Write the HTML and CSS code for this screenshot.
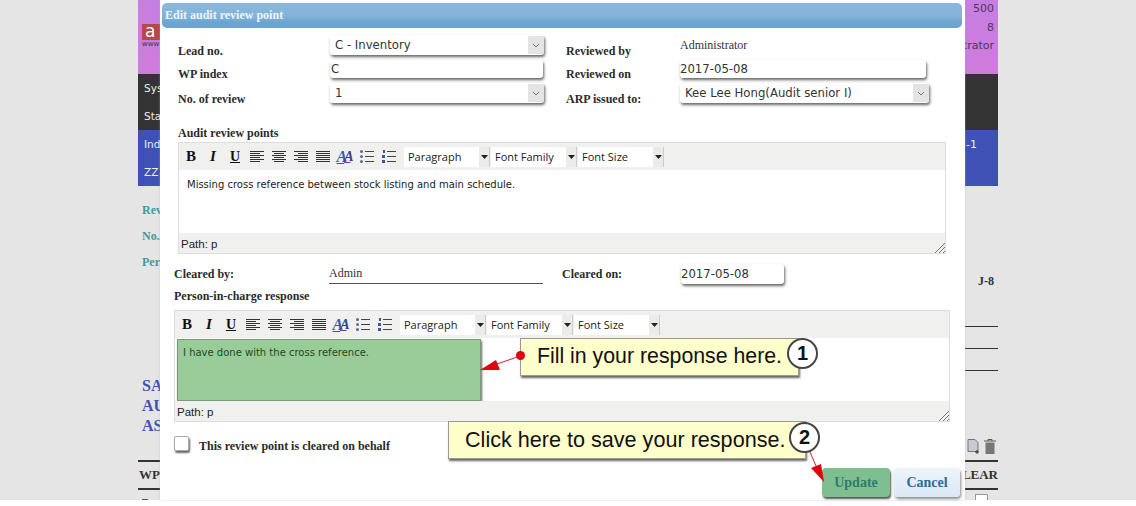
FILE: index.html
```html
<!DOCTYPE html>
<html lang="en">
<head>
  <meta charset="UTF-8" />
  <title>Edit audit review point</title>
  <link rel="stylesheet" href="styles.css">
</head>
<body>
  <svg class="defs" width="0" height="0">
    <symbol id="i-left" viewBox="0 0 14 11"><path d="M0 .5h14M0 2.5h10M0 4.5h14M0 6.5h10M0 8.5h14M0 10.5h10" stroke="#333" fill="none"/></symbol>
    <symbol id="i-center" viewBox="0 0 14 11"><path d="M0 .5h14M2 2.5h10M0 4.5h14M2 6.5h10M0 8.5h14M2 10.5h10" stroke="#333" fill="none"/></symbol>
    <symbol id="i-right" viewBox="0 0 14 11"><path d="M0 .5h14M4 2.5h10M0 4.5h14M4 6.5h10M0 8.5h14M4 10.5h10" stroke="#333" fill="none"/></symbol>
    <symbol id="i-full" viewBox="0 0 14 11"><path d="M0 .5h14M0 2.5h14M0 4.5h14M0 6.5h14M0 8.5h14M0 10.5h14" stroke="#333" fill="none"/></symbol>
    <symbol id="i-bullet" viewBox="0 0 14 13"><path d="M5 1.500h9M5 6.500h9M5 11.500h9" stroke="#444" fill="none"/><circle cx="1.500" cy="1.500" r="1.500" fill="#5a6a90"/><circle cx="1.500" cy="6.500" r="1.500" fill="#5a6a90"/><circle cx="1.500" cy="11.500" r="1.500" fill="#5a6a90"/></symbol>
    <symbol id="i-number" viewBox="0 0 14 13"><path d="M5 1.500h9M5 6.500h9M5 11.500h9" stroke="#444" fill="none"/><path d="M1 0h2v3H1zM0 5h3v3H0zM0 10h3v3H0z" fill="#3a55a0"/></symbol>
    <symbol id="i-caret" viewBox="0 0 7 4"><path d="M0 0h7L3.500 4z" fill="#222"/></symbol>
    <symbol id="i-grip" viewBox="0 0 10 10"><path d="M0 10L10 0M4 10l6-6M8 10l2-2" stroke="#777" fill="none"/></symbol>
    <symbol id="i-chevron" viewBox="0 0 8 5"><path d="M1 1l3 3 3-3" stroke="#777" fill="none"/></symbol>
  </svg>

  <div class="page">
    <div class="app">
      <header class="app-header">
        <div class="logo">
          <div class="logo-mark">a</div>
          <div class="logo-sub">www</div>
        </div>
        <div class="app-info">
          <div>500</div>
          <div>8</div>
          <div>trator</div>
        </div>
      </header>
      <div class="band band-dark">
        <div class="band-row"><span>Sys</span></div>
        <div class="band-row"><span>Sta</span></div>
      </div>
      <div class="band band-blue">
        <div class="band-row"><span>Ind</span><span class="band-end">-1</span></div>
        <div class="band-row"><span>ZZ</span></div>
      </div>
      <section class="summary">
        <div class="summary-left">
          <div class="meta-line">Rev</div>
          <div class="meta-line">No.</div>
          <div class="meta-line">Per</div>
          <div class="title-lines">
            <div>SA</div>
            <div>AU</div>
            <div>AS</div>
          </div>
        </div>
        <div class="summary-right">
          <div class="ref">J-8</div>
          <div class="rule"></div>
          <div class="rule"></div>
          <div class="rule"></div>
          <div class="tools">
            <svg width="13" height="15" viewBox="0 0 13 15"><path d="M1 .5h7l3 3v9H1z" fill="#c9c9d2" stroke="#777"/><path d="M10 11v4M8 13h4" stroke="#333"/></svg>
            <svg width="12" height="15" viewBox="0 0 12 15"><path d="M0 2h12M4 2V.5h4V2" stroke="#555" fill="none"/><path d="M1.500 3.500h9V15h-9z" fill="#777"/></svg>
          </div>
        </div>
      </section>
      <div class="table-head"><span>WP</span><span>LEAR</span></div>
      <div class="table-row"><span class="table-stub"></span><span class="table-check"></span></div>
    </div>
  </div>

  <div class="modal">
    <div class="modal-title">Edit audit review point</div>
    <div class="form-grid">
      <label class="lbl lbl-low">Lead no.</label>
      <div class="select"><span>C - Inventory</span><i class="select-btn"><svg width="8" height="5"><use href="#i-chevron"/></svg></i></div>
      <label class="lbl lbl-low">Reviewed by</label>
      <div class="plain-value">Administrator</div>

      <label class="lbl lbl-low">WP index</label>
      <input class="field field-tight" type="text" value="C">
      <label class="lbl lbl-low">Reviewed on</label>
      <input class="field field-date" type="text" value="2017-05-08">

      <label class="lbl lbl-low">No. of review</label>
      <div class="select"><span>1</span><i class="select-btn"><svg width="8" height="5"><use href="#i-chevron"/></svg></i></div>
      <label class="lbl lbl-low">ARP issued to:</label>
      <div class="select select-wide"><span>Kee Lee Hong(Audit senior I)</span><i class="select-btn"><svg width="8" height="5"><use href="#i-chevron"/></svg></i></div>
    </div>

    <div class="section-label section-audit">Audit review points</div>
    <div class="editor editor-audit">
      <div class="toolbar">
        <span class="tb tb-b">B</span>
        <span class="tb tb-i">I</span>
        <span class="tb tb-u">U</span>
        <span class="tb"><svg width="14" height="11"><use href="#i-left"/></svg></span>
        <span class="tb"><svg width="14" height="11"><use href="#i-center"/></svg></span>
        <span class="tb"><svg width="14" height="11"><use href="#i-right"/></svg></span>
        <span class="tb"><svg width="14" height="11"><use href="#i-full"/></svg></span>
        <span class="tb tb-a">A<b>A</b></span>
        <span class="tb"><svg width="14" height="13"><use href="#i-bullet"/></svg></span>
        <span class="tb"><svg width="14" height="13"><use href="#i-number"/></svg></span>
        <span class="tb-select">Paragraph</span><span class="tb-arrow"><svg width="7" height="4"><use href="#i-caret"/></svg></span>
        <span class="tb-select">Font Family</span><span class="tb-arrow"><svg width="7" height="4"><use href="#i-caret"/></svg></span>
        <span class="tb-select">Font Size</span><span class="tb-arrow"><svg width="7" height="4"><use href="#i-caret"/></svg></span>
      </div>
      <div class="editor-body"><p class="editor-text">Missing cross reference between stock listing and main schedule.</p></div>
      <div class="statusbar"><span>Path: p</span><svg width="10" height="10"><use href="#i-grip"/></svg></div>
    </div>

    <div class="cleared-row">
      <label class="lbl">Cleared by:</label>
      <div class="underlined">Admin</div>
      <label class="lbl">Cleared on:</label>
      <input class="field field-cleared" type="text" value="2017-05-08">
    </div>

    <div class="section-label section-response">Person-in-charge response</div>
    <div class="editor editor-response">
      <div class="toolbar">
        <span class="tb tb-b">B</span>
        <span class="tb tb-i">I</span>
        <span class="tb tb-u">U</span>
        <span class="tb"><svg width="14" height="11"><use href="#i-left"/></svg></span>
        <span class="tb"><svg width="14" height="11"><use href="#i-center"/></svg></span>
        <span class="tb"><svg width="14" height="11"><use href="#i-right"/></svg></span>
        <span class="tb"><svg width="14" height="11"><use href="#i-full"/></svg></span>
        <span class="tb tb-a">A<b>A</b></span>
        <span class="tb"><svg width="14" height="13"><use href="#i-bullet"/></svg></span>
        <span class="tb"><svg width="14" height="13"><use href="#i-number"/></svg></span>
        <span class="tb-select">Paragraph</span><span class="tb-arrow"><svg width="7" height="4"><use href="#i-caret"/></svg></span>
        <span class="tb-select">Font Family</span><span class="tb-arrow"><svg width="7" height="4"><use href="#i-caret"/></svg></span>
        <span class="tb-select">Font Size</span><span class="tb-arrow"><svg width="7" height="4"><use href="#i-caret"/></svg></span>
      </div>
      <div class="editor-body"><div class="highlight">I have done with the cross reference.</div></div>
      <div class="statusbar"><span>Path: p</span><svg width="10" height="10"><use href="#i-grip"/></svg></div>
    </div>

    <div class="behalf-row">
      <span class="checkbox"></span>
      <label class="lbl">This review point is cleared on behalf</label>
    </div>

    <div class="actions">
      <button class="btn btn-update">Update</button>
      <button class="btn btn-cancel">Cancel</button>
    </div>
  </div>

  <div class="callout callout-one">Fill in your response here.<span class="callout-num">1</span></div>
  <div class="callout callout-two">Click here to save your response.<span class="callout-num">2</span></div>

  <!-- annotation arrows sit over the callouts -->
  <svg class="arrows" width="1136" height="506" viewBox="0 0 1136 506">
    <path d="M520 356L497 364" stroke="#e8182c" stroke-width="1"/>
    <circle cx="520.500" cy="355.500" r="4.500" fill="#e00012"/>
    <path d="M480 370L496 360L500 370z" fill="#e00012"/>
    <path d="M810 452L816 466" stroke="#e8182c" stroke-width="1"/>
    <path d="M824 482L811 468L821 464z" fill="#e00012"/>
  </svg>
</body>
</html>
```

FILE: styles.css
```css
* {
  box-sizing: border-box;
  margin: 0;
  padding: 0;
}

body {
  background: #fff;
  height: 506px;
  overflow: hidden;
  position: relative;
  font-family: 'Liberation Serif', serif;
}

.defs {
  position: absolute;
}

/* page behind the dialog */
.page {
  background: #e5e5e5;
  height: 500px;
  overflow: hidden;
  display: flex;
  justify-content: center;
}

.app {
  width: 860px;
  display: flex;
  flex-direction: column;
}

.app-header {
  height: 74px;
  flex: none;
  background: linear-gradient(#c67ee2, #cf7bdc);
  display: flex;
  justify-content: space-between;
  padding: 0 4px;
  color: #4a3a55;
  font-family: 'DejaVu Sans', sans-serif;
  font-size: 11px;
}

.logo {
  margin-top: 24px;
  width: 30px;
}

.logo-mark {
  background: #b6474d;
  color: #fff;
  height: 16px;
  line-height: 14px;
  font-size: 17px;
  padding-left: 3px;
}

.logo-sub {
  font-size: 7px;
  line-height: 8px;
  color: #333;
}

.app-info {
  text-align: right;
  line-height: 18.500px;
}

.band {
  flex: none;
  font-family: 'DejaVu Sans', sans-serif;
  font-size: 10.500px;
  color: #eee;
  padding: 0 0 0 6px;
}

.band-dark {
  background: #333;
}

.band-blue {
  background: #3f51b5;
}

.band-row {
  height: 28px;
  display: flex;
  justify-content: space-between;
  align-items: center;
}

.band-end {
  width: 32px;
  font-size: 11px;
}

.summary {
  height: 274px;
  flex: none;
  display: flex;
  justify-content: space-between;
}

.summary-left {
  padding: 16px 0 0 4px;
}

.meta-line {
  height: 16px;
  margin-bottom: 10px;
  font-size: 12px;
  font-weight: bold;
  line-height: 16px;
  color: #3f9a9a;
}

.title-lines {
  margin-top: 106px;
  font-size: 16px;
  font-weight: bold;
  line-height: 20px;
  color: #3f51b5;
}

.summary-right {
  width: 33px;
  padding-top: 88px;
}

.ref {
  height: 14px;
  font-size: 12px;
  font-weight: bold;
  line-height: 14px;
  color: #333;
  text-align: right;
  padding-right: 4px;
  margin-bottom: 38px;
}

.rule {
  height: 1px;
  background: #333;
  margin-bottom: 21px;
}

.tools {
  display: flex;
  gap: 4px;
  padding-left: 2px;
  margin-top: 68px;
}

.table-head {
  flex: none;
  height: 30px;
  border-top: 2px solid #333;
  border-bottom: 2px solid #333;
  display: flex;
  justify-content: space-between;
  align-items: center;
  font-size: 13px;
  font-weight: bold;
  color: #333;
  padding: 0 0 0 1px;
}

.table-row {
  flex: none;
  display: flex;
  justify-content: space-between;
  padding: 4px 10px 0 4px;
}

.table-stub {
  width: 6px;
  height: 1px;
  margin-top: 5px;
  background: #555;
}

.table-check {
  width: 13px;
  height: 13px;
  background: #fff;
  border: 1px solid #999;
}

/* dialog */
.modal {
  position: absolute;
  left: 160px;
  top: 0;
  width: 805px;
  height: 500px;
  background: #fff;
  box-shadow: 0 0 2px rgba(160, 185, 215, 0.6);
}

.modal-title {
  height: 25px;
  margin: 3px 3px 0 2px;
  border-radius: 5px;
  background: linear-gradient(#8ab8dc 0, #82b3d9 55%, #6fa5d0 75%, #6ca3cf 100%);
  color: #f0f4f8;
  font-size: 12px;
  font-weight: bold;
  line-height: 25px;
  padding-left: 3px;
}

.lbl {
  font-size: 12px;
  font-weight: bold;
  color: #2b2b2b;
  line-height: 14px;
}

.lbl-low {
  align-self: end;
  margin-bottom: -3px;
}

.form-grid {
  margin: 7px 0 0 18px;
  display: grid;
  grid-template-columns: 152px 214px 136px 250px;
  grid-template-rows: 20px 18px 20px;
  row-gap: 5px;
}

.form-grid .lbl:nth-child(4n+3) {
  margin-left: 22px;
}

.select {
  display: flex;
  justify-content: space-between;
  align-items: stretch;
  background: #fff;
  border-radius: 3px;
  box-shadow: 1px 2px 3px #666;
  font-family: 'DejaVu Sans', sans-serif;
  font-size: 11.700px;
  line-height: 20px;
  color: #333;
  padding-left: 5px;
}

.select-btn {
  width: 16px;
  margin: 1px 0;
  background: #e4e4e4;
  display: flex;
  align-items: center;
  justify-content: center;
}

.select-wide {
  width: 249px;
}

.plain-value {
  font-size: 12px;
  color: #333;
  line-height: 20px;
}

.field {
  border: 0;
  outline: none;
  background: #fff;
  border-radius: 3px;
  box-shadow: 1px 2px 3px #666;
  font-family: 'DejaVu Sans', sans-serif;
  font-size: 11.700px;
  color: #333;
  padding: 0;
  height: 18px;
}

.field-tight {
  width: 213px;
  padding-left: 1px;
}

.field-date {
  width: 246px;
}

.field-cleared {
  width: 103px;
  height: 20px;
}

.section-label {
  font-size: 12px;
  font-weight: bold;
  line-height: 14px;
  color: #2b2b2b;
}

.section-audit {
  margin: 23px 0 2px 18px;
}

.section-response {
  margin: 5px 0 7px 14px;
}

.editor {
  height: 112px;
  display: flex;
  flex-direction: column;
  border: 1px solid #ddd;
  background: #fff;
}

.editor-audit {
  width: 768px;
  margin-left: 18px;
}

.editor-response {
  width: 776px;
  margin-left: 14px;
}

.toolbar {
  height: 27px;
  flex: none;
  background: #f0f0ee;
  display: flex;
  align-items: center;
  padding-left: 1px;
}

.tb {
  width: 22px;
  height: 20px;
  flex: none;
  display: flex;
  align-items: center;
  justify-content: center;
  font-size: 15px;
  font-weight: bold;
  color: #111;
}

.tb-i {
  font-style: italic;
}

.tb-u {
  text-decoration: underline;
  font-size: 14px;
}

.tb-a {
  font-style: italic;
  color: #3a5ab0;
  font-size: 16px;
  letter-spacing: -3px;
  padding-right: 3px;
  text-decoration: underline;
  text-decoration-color: #6a3d9a;
}

.tb-a b {
  color: #33409a;
  font-size: 14px;
}

.tb-select {
  width: 75px;
  height: 20px;
  flex: none;
  background: #fff;
  font-family: 'Open Sans', sans-serif;
  font-size: 11px;
  line-height: 20px;
  color: #222;
  padding-left: 4px;
}

.tb + .tb-select {
  margin-left: 4px;
}

.tb-arrow {
  width: 11px;
  height: 20px;
  margin-right: 1px;
  flex: none;
  background: #ebebe9;
  border-right: 1px solid #ccc;
  display: flex;
  align-items: center;
  justify-content: center;
}

.editor-body {
  flex: 1;
  background: #fff;
  overflow: hidden;
}

.editor-text {
  font-family: 'DejaVu Sans', sans-serif;
  font-size: 10px;
  color: #222;
  padding: 9px 8px;
  line-height: 12px;
}

.highlight {
  width: 304px;
  height: 62px;
  margin: 1px 0 0 2px;
  background: #99cc99;
  border: 1px solid #7b9a7b;
  box-shadow: 1px 2px 2px #666;
  font-family: 'DejaVu Sans', sans-serif;
  font-size: 10px;
  line-height: 12px;
  color: #1f4a1f;
  padding: 7px 5px;
}

.statusbar {
  height: 20px;
  flex: none;
  background: #f0f0ee;
  display: flex;
  justify-content: space-between;
  align-items: flex-end;
  font-family: 'Liberation Sans', sans-serif;
  font-size: 11.500px;
  line-height: 18px;
  color: #222;
  padding-left: 2px;
}

.cleared-row {
  margin: 10px 0 0 14px;
  height: 20px;
  display: grid;
  grid-template-columns: 155px 214px 19px 119px 103px;
  align-items: center;
}

.underlined {
  font-size: 12px;
  color: #333;
  border-bottom: 1px solid #555;
  height: 20px;
  line-height: 18px;
}

.cleared-row .lbl:nth-child(3) {
  grid-column: 4;
}

.behalf-row {
  height: 15px;
  margin: 14px 0 0 14px;
  display: flex;
  align-items: center;
  gap: 10px;
}

.checkbox {
  width: 15px;
  height: 15px;
  background: #fff;
  border: 1px solid #aaa;
  border-radius: 2px;
  box-shadow: 1px 2px 2px #666;
}

.behalf-row .lbl {
  padding-top: 4px;
}

.actions {
  margin: 17px 5px 0 0;
  display: flex;
  justify-content: flex-end;
  gap: 4px;
}

.btn {
  height: 29px;
  border: 0;
  border-radius: 4px;
  font-family: 'Liberation Serif', serif;
  font-size: 14px;
  font-weight: bold;
  cursor: pointer;
}

.btn-update {
  width: 68px;
  background: #7fbf8f;
  color: #2e7d6b;
  box-shadow: 1px 2px 2px #555;
}

.btn-cancel {
  width: 66px;
  background: linear-gradient(#eef4fa, #dbe8f5);
  color: #2f6a9a;
  box-shadow: 1px 2px 3px #888;
}

/* callouts */
.arrows {
  position: absolute;
  left: 0;
  top: 0;
  pointer-events: none;
}

.callout {
  position: absolute;
  height: 38px;
  background: #ffffcc;
  border: 1px solid #999;
  box-shadow: 1px 2px 2px #666;
  font-family: 'Liberation Sans', sans-serif;
  font-size: 21.300px;
  line-height: 35px;
  color: #111;
  padding-left: 16px;
  white-space: nowrap;
}

.callout-one {
  left: 520px;
  top: 338px;
  width: 279px;
}

.callout-two {
  left: 448px;
  top: 421px;
  width: 358px;
  font-size: 21.600px;
  line-height: 36px;
}

.callout-num {
  position: absolute;
  right: -20px;
  top: -1px;
  width: 31px;
  height: 31px;
  border-radius: 50%;
  background: #fff;
  border: 2px solid #444;
  font-size: 20px;
  font-weight: bold;
  line-height: 27px;
  text-align: center;
}

.callout-two .callout-num {
  right: -15px;
  top: 0;
}
```
